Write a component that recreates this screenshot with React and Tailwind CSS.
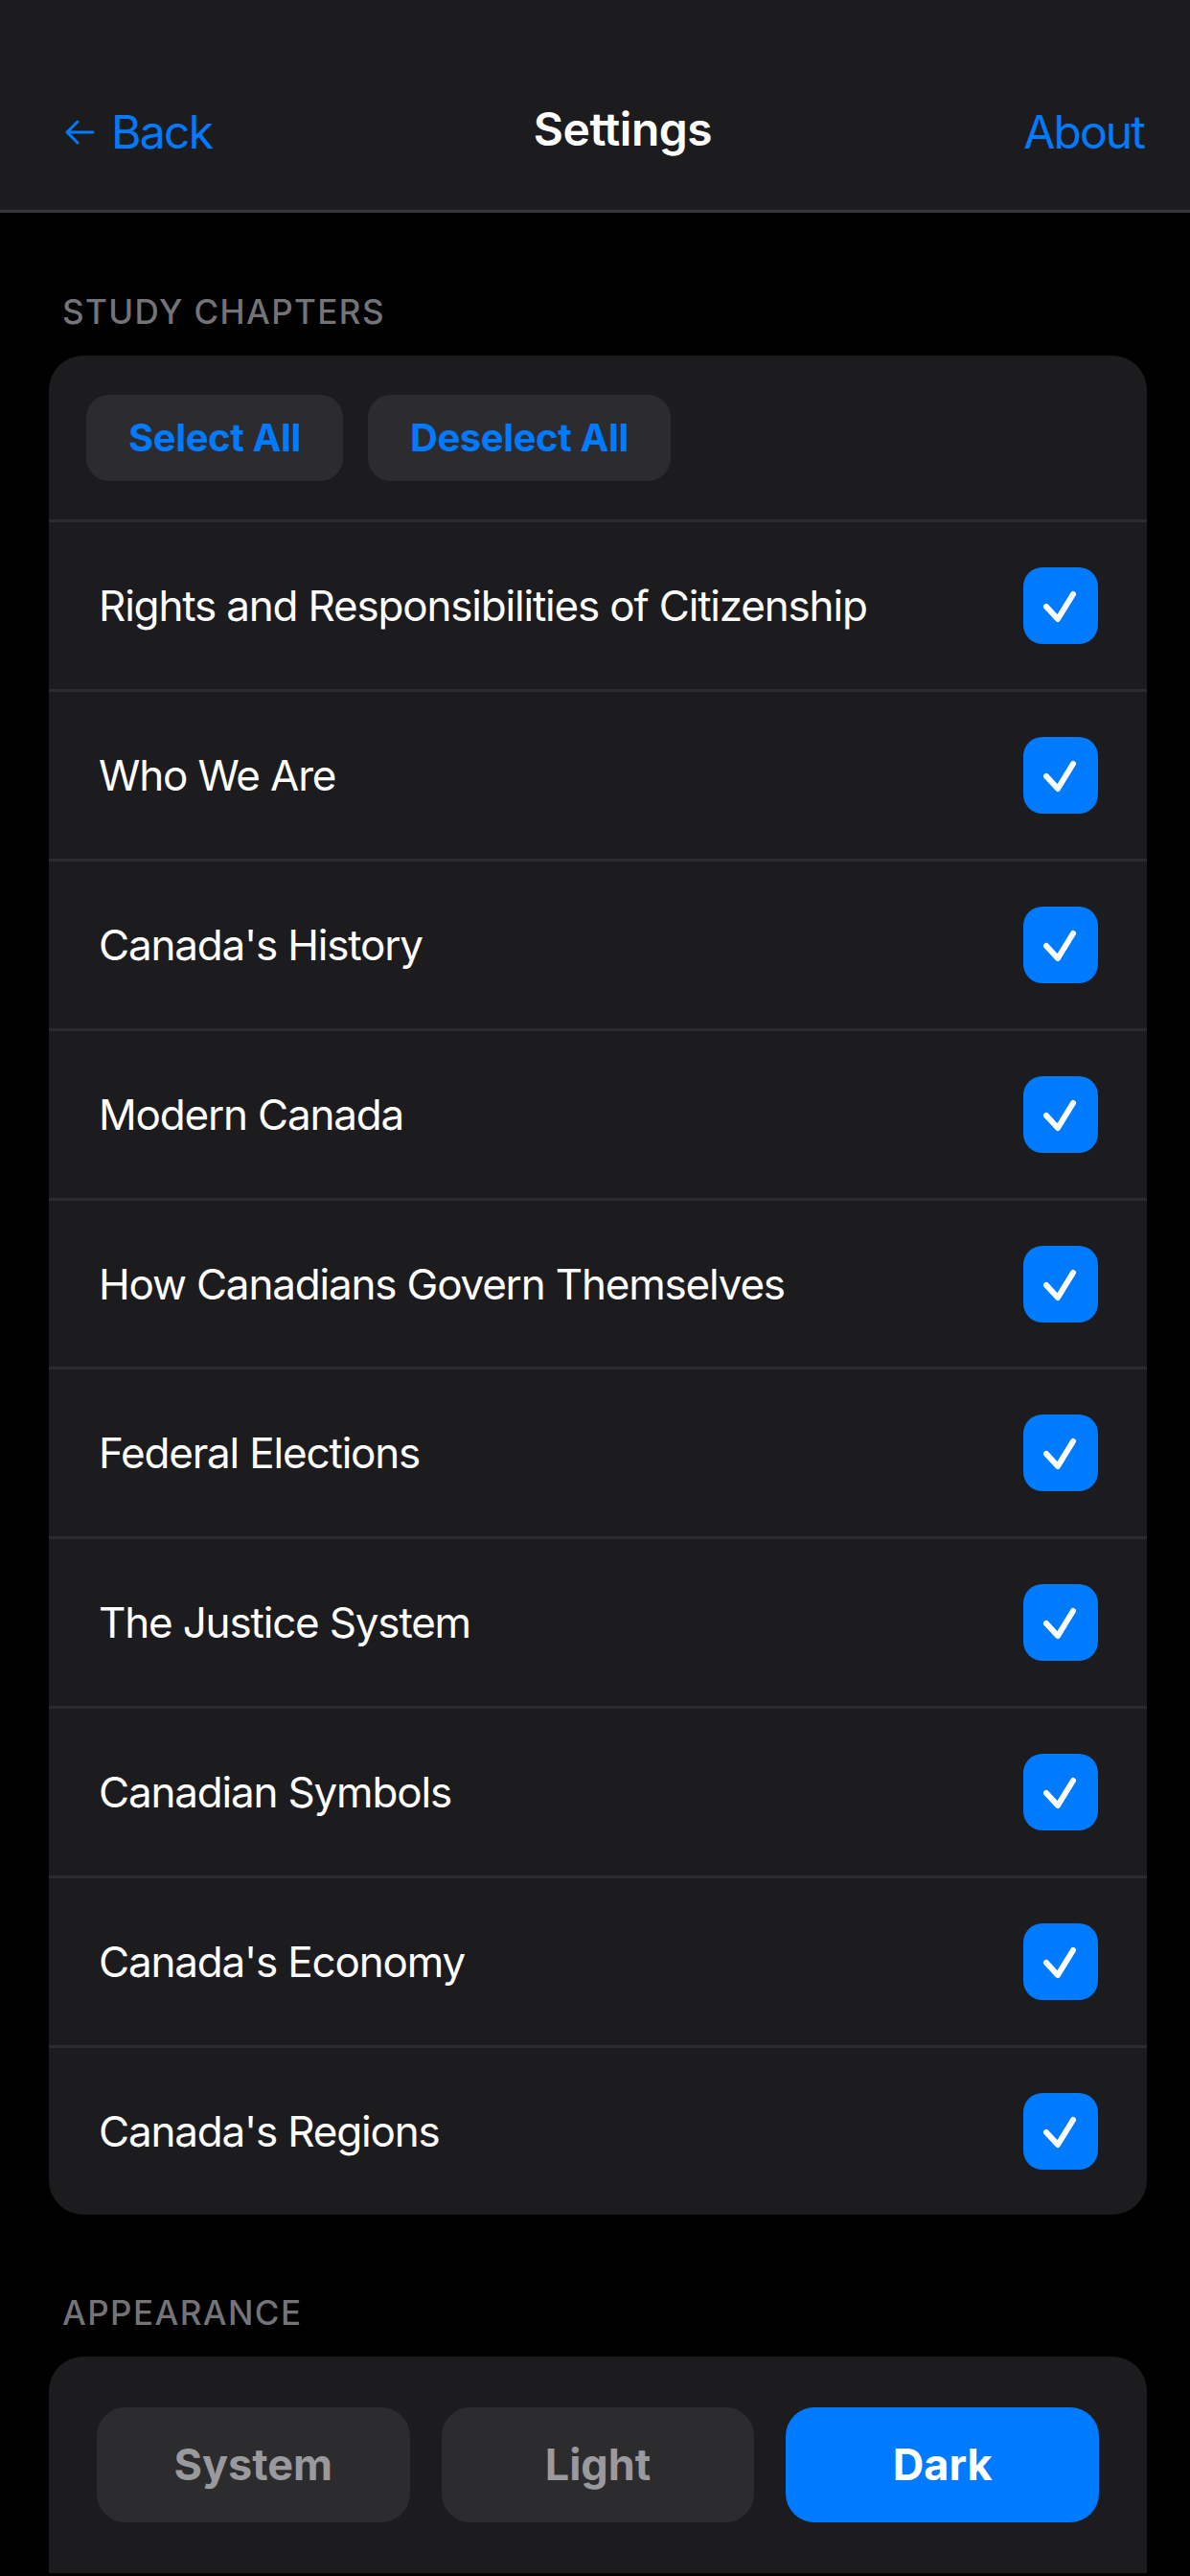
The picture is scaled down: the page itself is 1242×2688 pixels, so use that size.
const chapters = [
  'Rights and Responsibilities of Citizenship',
  'Who We Are',
  "Canada's History",
  'Modern Canada',
  'How Canadians Govern Themselves',
  'Federal Elections',
  'The Justice System',
  'Canadian Symbols',
  "Canada's Economy",
  "Canada's Regions",
]

function Checkbox() {
  return (
    <div className="w-[78px] h-[80px] rounded-[20px] bg-[#007aff] flex items-center justify-center shrink-0">
      <svg width="78" height="80" viewBox="0 0 78 80" fill="none" stroke="white" strokeWidth="6" strokeLinecap="round" strokeLinejoin="round">
        <polyline points="24,41 36,54 52,28" />
      </svg>
    </div>
  )
}

function SectionLabel({ children }) {
  return (
    <div className="px-[65px] text-[35px] leading-[44px] font-medium tracking-[0.04em] text-[#737378]">
      {children}
    </div>
  )
}

export default function App() {
  return (
    <div className="min-h-[2688px] bg-black text-white" style={{ fontFamily: 'Inter, "Noto Sans", sans-serif' }}>
      {/* Nav bar */}
      <div className="h-[222px] pt-[57px] bg-[#1c1c1e] border-b-[3px] border-[#38383a] flex items-center justify-between pl-[67px] pr-[48px] relative">
        <div className="flex items-center gap-[17px] text-[#007aff] text-[48px] tracking-[-0.035em]">
          <svg width="32" height="28" viewBox="0 0 32 28" fill="none" stroke="currentColor" strokeWidth="3" strokeLinecap="round" strokeLinejoin="round">
            <path d="M30 14H3M14 3L3 14l11 11" />
          </svg>
          <span>Back</span>
        </div>
        <div className="absolute left-[58px] right-0 bottom-[60px] text-center text-[48px] font-semibold leading-[48px] tracking-[-0.01em] pointer-events-none">
          Settings
        </div>
        <div className="text-[#007aff] text-[48px] tracking-[-0.04em]">About</div>
      </div>

      {/* Study chapters */}
      <div className="mt-[81px]">
        <SectionLabel>STUDY CHAPTERS</SectionLabel>
        <div className="mt-[24px] ml-[51px] mr-[45px] bg-[#1c1c1e] rounded-[36px] overflow-hidden">
          <div className="flex gap-[26px] px-[39px] pt-[41px] pb-[40px]">
            <button className="h-[90px] px-[44px] rounded-[24px] bg-[#2c2c2e] text-[#007aff] text-[40px] font-bold tracking-[-0.01em]">
              Select All
            </button>
            <button className="h-[90px] px-[44px] rounded-[24px] bg-[#2c2c2e] text-[#007aff] text-[40px] font-bold tracking-[-0.01em]">
              Deselect All
            </button>
          </div>
          {chapters.map((c) => (
            <div key={c} className="h-[176.9px] border-t-[3px] border-[#2c2c2e] flex items-center justify-between pl-[52px] pr-[51px]">
              <span className="text-[44px] tracking-[-0.027em]">{c}</span>
              <Checkbox />
            </div>
          ))}
        </div>
      </div>

      {/* Appearance */}
      <div className="mt-[80px]">
        <SectionLabel>APPEARANCE</SectionLabel>
        <div className="mt-[24px] ml-[51px] mr-[45px] bg-[#1c1c1e] rounded-t-[36px] px-[50px] pt-[53px] pb-[53px]">
          <div className="grid grid-cols-3 gap-[33px]">
            <button className="h-[120px] rounded-[30px] bg-[#2c2c2e] text-[#9a9a9e] text-[45px] font-bold">System</button>
            <button className="h-[120px] rounded-[30px] bg-[#2c2c2e] text-[#9a9a9e] text-[45px] font-bold">Light</button>
            <button className="h-[120px] rounded-[30px] bg-[#007aff] text-white text-[45px] font-bold">Dark</button>
          </div>
        </div>
      </div>
    </div>
  )
}
